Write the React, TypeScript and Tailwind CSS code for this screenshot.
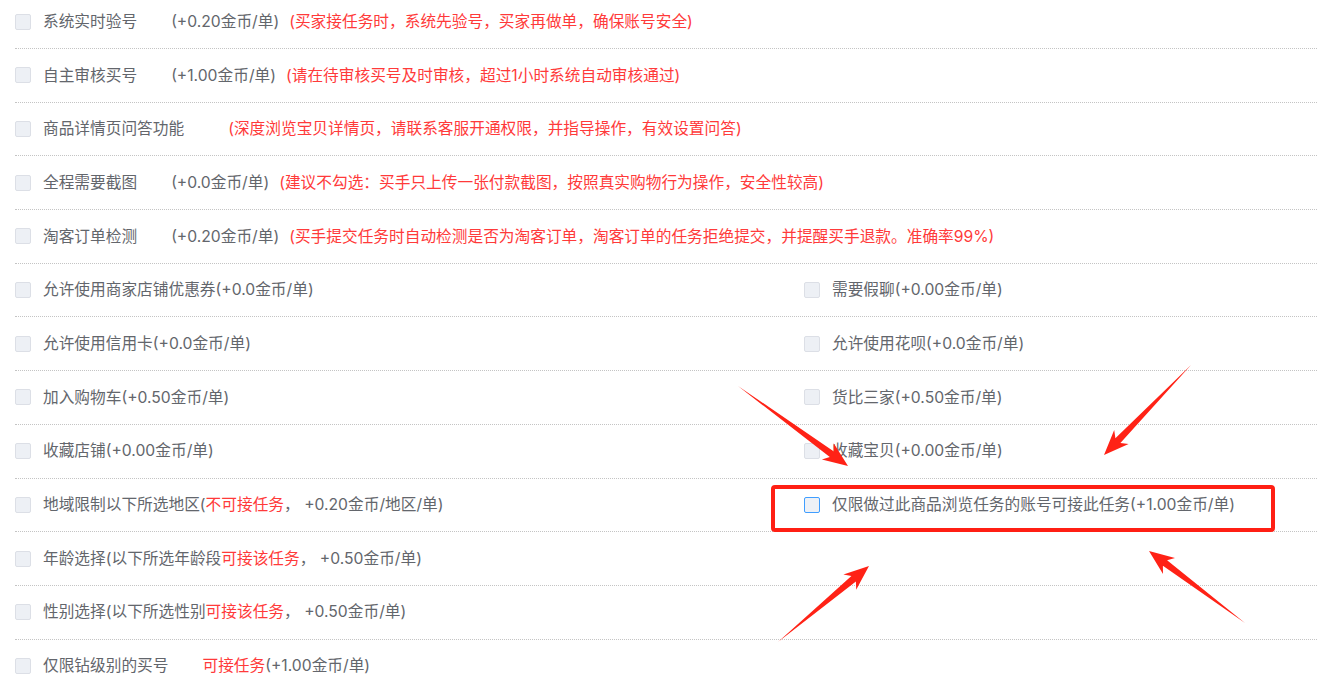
import type { ReactNode } from "react"

type Pt = [number, number]

// red pointer arrow polygon from tail to tip
function arrowPoints(tail: Pt, tip: Pt) {
  const [x1, y1] = tail
  const [x2, y2] = tip
  const len = Math.hypot(x2 - x1, y2 - y1)
  const ux = (x2 - x1) / len
  const uy = (y2 - y1) / len
  const nx = -uy
  const ny = ux
  const head = 20
  const shaft = 3.5
  const wing = 10
  const back = 5
  const bx = x2 - ux * head
  const by = y2 - uy * head
  const pts: Pt[] = [
    [x1, y1],
    [bx + nx * shaft, by + ny * shaft],
    [bx + nx * wing - ux * back, by + ny * wing - uy * back],
    [x2, y2],
    [bx - nx * wing - ux * back, by - ny * wing - uy * back],
    [bx - nx * shaft, by - ny * shaft],
  ]
  return pts.map((p) => p.map((v) => v.toFixed(1)).join(",")).join(" ")
}

const arrows: [Pt, Pt][] = [
  [[738, 386], [848, 466]],
  [[1191, 365], [1104, 455]],
  [[778, 642], [869, 566]],
  [[1245, 623], [1149, 551]],
]

function Checkbox({ active }: { active?: boolean }) {
  return (
    <span
      className={
        active
          ? "inline-block h-4 w-4 shrink-0 rounded-[2px] border border-[#409eff] bg-[#eef1f6]"
          : "inline-block h-4 w-4 shrink-0 rounded-[2px] border border-[#dcdfe6] bg-[#edf0f5]"
      }
    />
  )
}

function Option({ active, children }: { active?: boolean; children: ReactNode }) {
  return (
    <div className="flex items-center gap-3 whitespace-nowrap">
      <Checkbox active={active} />
      <span>{children}</span>
    </div>
  )
}

const Red = ({ children }: { children: ReactNode }) => (
  <span className="text-[#ff3a3a]">{children}</span>
)

const services = [
  {
    label: "系统实时验号",
    price: "(+0.20金币/单)",
    note: "(买家接任务时，系统先验号，买家再做单，确保账号安全)",
  },
  {
    label: "自主审核买号",
    price: "(+1.00金币/单)",
    note: "(请在待审核买号及时审核，超过1小时系统自动审核通过)",
  },
  {
    label: "商品详情页问答功能",
    price: "",
    note: "(深度浏览宝贝详情页，请联系客服开通权限，并指导操作，有效设置问答)",
  },
  {
    label: "全程需要截图",
    price: "(+0.0金币/单)",
    note: "(建议不勾选：买手只上传一张付款截图，按照真实购物行为操作，安全性较高)",
  },
  {
    label: "淘客订单检测",
    price: "(+0.20金币/单)",
    note: "(买手提交任务时自动检测是否为淘客订单，淘客订单的任务拒绝提交，并提醒买手退款。准确率99%)",
  },
]

const pairs: [ReactNode, ReactNode, boolean?][] = [
  ["允许使用商家店铺优惠券(+0.0金币/单)", "需要假聊(+0.00金币/单)"],
  ["允许使用信用卡(+0.0金币/单)", "允许使用花呗(+0.0金币/单)"],
  ["加入购物车(+0.50金币/单)", "货比三家(+0.50金币/单)"],
  ["收藏店铺(+0.00金币/单)", "收藏宝贝(+0.00金币/单)"],
  [
    <>
      地域限制以下所选地区(<Red>不可接任务</Red>， +0.20金币/地区/单)
    </>,
    "仅限做过此商品浏览任务的账号可接此任务(+1.00金币/单)",
    true,
  ],
  [
    <>
      年龄选择(以下所选年龄段<Red>可接该任务</Red>， +0.50金币/单)
    </>,
    null,
  ],
  [
    <>
      性别选择(以下所选性别<Red>可接该任务</Red>， +0.50金币/单)
    </>,
    null,
  ],
]

const row = "flex h-[53.7px] items-center border-b border-dotted border-[#c4c4c4]"

export default function App() {
  return (
    <div className="relative h-[687px] w-[1317px] overflow-hidden bg-white font-['Inter','Noto_Sans_CJK_SC',sans-serif] text-[15.7px] text-[#63666c]">
      <div className="mt-[-4.7px] pl-[15px]">
        {services.map((s) => (
          <div key={s.label} className={row}>
            <Option>
              <span className="mr-[34px]">{s.label}</span>
              {s.price}
              <span className="ml-[10px]">
                <Red>{s.note}</Red>
              </span>
            </Option>
          </div>
        ))}
        {pairs.map(([left, right, active], i) => (
          <div key={i} className={row + " grid grid-cols-[789px_1fr]"}>
            <Option>{left}</Option>
            {right && <Option active={active}>{right}</Option>}
          </div>
        ))}
        <div className={row}>
          <Option>
            <span className="mr-[34px]">仅限钻级别的买号</span>
            <Red>可接任务</Red>(+1.00金币/单)
          </Option>
        </div>
      </div>

      <div className="absolute left-[771px] top-[485px] h-[47px] w-[504px] rounded-[4px] border-4 border-[#ff1f14]" />

      <svg className="pointer-events-none absolute left-0 top-0" width="1317" height="687">
        {arrows.map(([tail, tip], i) => (
          <polygon key={i} points={arrowPoints(tail, tip)} fill="#ff2216" />
        ))}
      </svg>
    </div>
  )
}
